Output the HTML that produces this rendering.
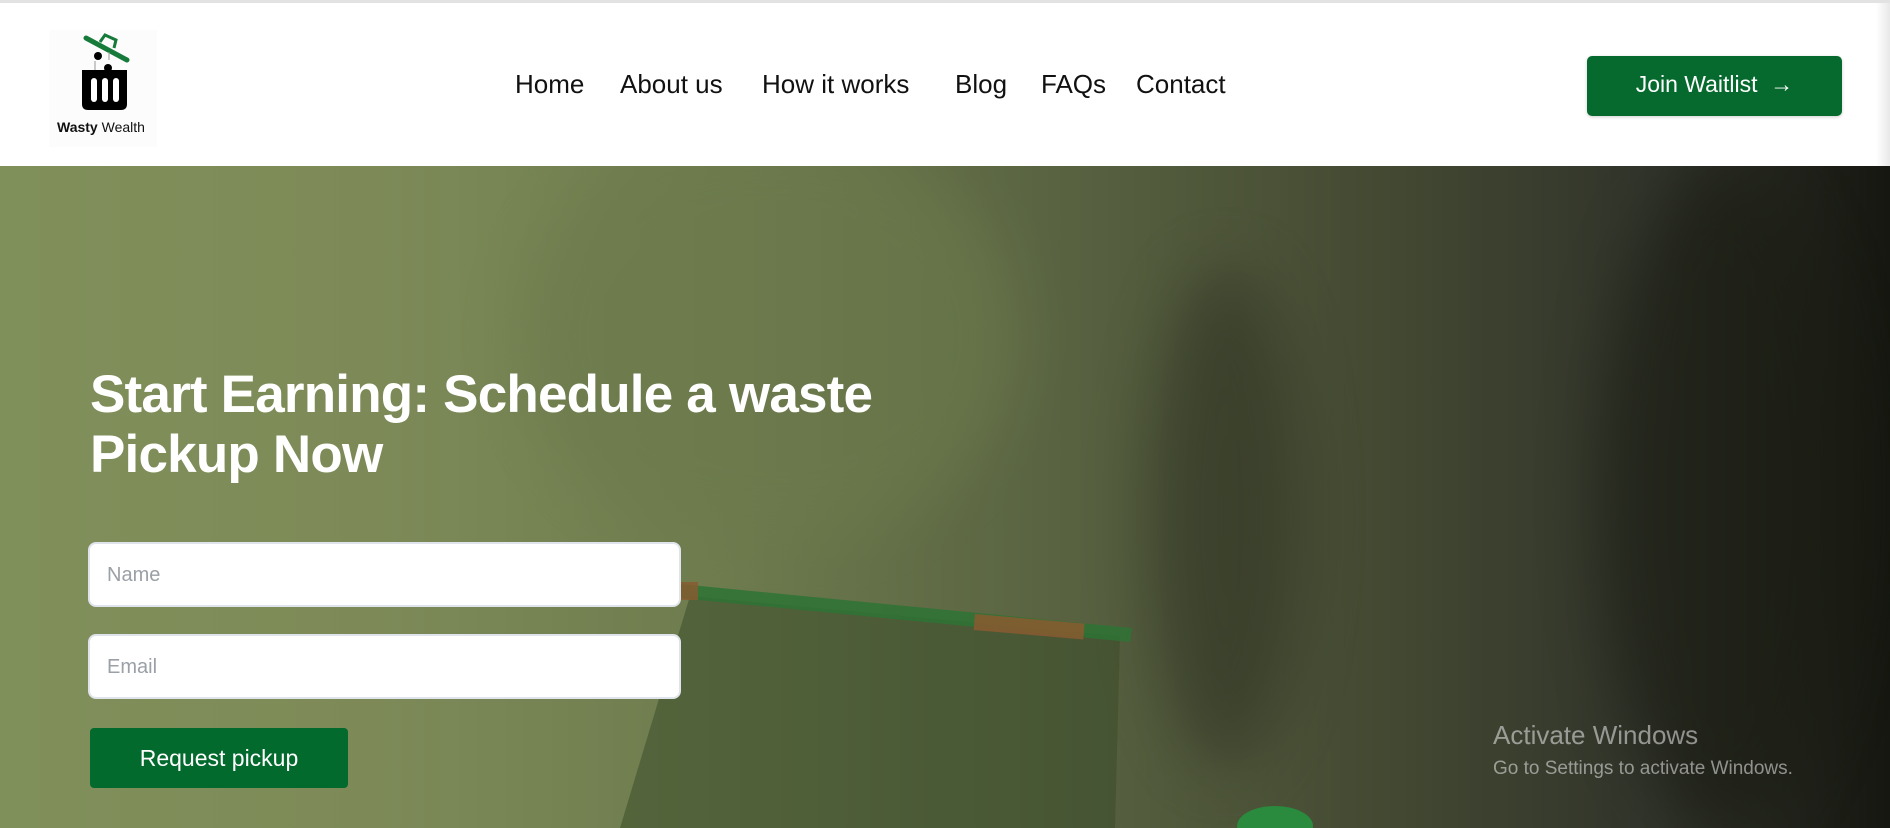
<!DOCTYPE html>
<html><head><meta charset="utf-8"><style>
*{margin:0;padding:0;box-sizing:border-box}
body{width:1890px;height:828px;overflow:hidden;font-family:"Liberation Sans",sans-serif;background:#fff;position:relative}
.top{position:absolute;left:0;top:0;width:1890px;height:3px;background:#e2e2e2}
header{position:absolute;left:0;top:3px;width:1890px;height:163px;background:#fff}
.logo{position:absolute;left:49px;top:27px;width:108px;height:117px;background:#fcfcfc}
nav{position:absolute;top:66px;left:515px;font-size:26px;color:#111}
nav span{position:absolute;white-space:nowrap}
.join{position:absolute;left:1587px;top:53px;width:255px;height:60px;background:#066a2e;border-radius:5px;color:#fff;font-size:23px;display:flex;align-items:center;justify-content:center;box-shadow:0 1px 3px rgba(0,0,0,.2);padding-bottom:3px}
.hero{position:absolute;left:0;top:166px;width:1890px;height:662px;overflow:hidden;
background:linear-gradient(90deg,#80905a 0%,#7d8a58 20%,#6e7c4e 38%,#5a6442 55%,#454b33 72%,#30332a 88%,#151710 100%)}
.blob{position:absolute;border-radius:50%;filter:blur(30px)}
h1{position:absolute;left:90px;top:365px;color:#fff;font-size:53px;font-weight:bold;line-height:60px;letter-spacing:-0.8px}
.inp{position:absolute;left:88px;width:593px;height:65px;background:#fff;border:2px solid #dfe3ec;border-radius:8px;font-size:20px;color:#9aa0a6;padding:20px 0 0 17px}
.req{position:absolute;left:90px;top:728px;width:258px;height:60px;background:#036a2e;border-radius:4px;color:#fff;font-size:23px;display:flex;align-items:center;justify-content:center}
.win{position:absolute;left:1493px;color:rgba(220,220,220,.6);font-family:"Liberation Sans",sans-serif}
.shadow{position:absolute;left:1876px;top:3px;width:14px;height:163px;background:linear-gradient(90deg,#fff,#e8e8e8)}
</style></head><body>
<div class="top"></div>
<header>
<div class="logo">
<svg width="108" height="117" viewBox="0 0 108 117">
<path d="M37 8 L78 30" stroke="#157a3a" stroke-width="5" stroke-linecap="round"/>
<path d="M51 12 L56 5 L67 10 L65 18" stroke="#157a3a" stroke-width="3" fill="none"/>
<circle cx="49" cy="26" r="4" fill="#000"/><circle cx="59" cy="38" r="4" fill="#000"/>
<line x1="46" y1="31" x2="46" y2="40" stroke="#999"/><line x1="60" y1="22" x2="60" y2="30" stroke="#999"/>
<path d="M33 40 H78 V74 Q78 80 72 80 H39 Q33 80 33 74 Z" fill="#000"/>
<rect x="42" y="48" width="6" height="24" rx="3" fill="#fff"/><rect x="53" y="48" width="6" height="24" rx="3" fill="#fff"/><rect x="64" y="48" width="6" height="24" rx="3" fill="#fff"/>
<text x="8" y="102" font-family="Liberation Sans Narrow, Liberation Sans, sans-serif" font-size="14" fill="#111"><tspan font-weight="bold">Wasty</tspan> Wealth</text>
</svg>
</div>
<nav><span style="left:0">Home</span><span style="left:105px">About us</span><span style="left:247px">How it works</span><span style="left:440px">Blog</span><span style="left:526px">FAQs</span><span style="left:621px">Contact</span></nav>
<div class="join">Join Waitlist&nbsp;&nbsp;→</div>
</header>
<div class="shadow"></div>
<div class="hero">
<div class="blob" style="left:520px;top:-40px;width:500px;height:420px;background:#6c7a4c;opacity:.6"></div>
<div class="blob" style="left:1150px;top:100px;width:150px;height:500px;background:#2a2d20;opacity:.5"></div>
<div class="blob" style="left:1600px;top:0;width:250px;height:662px;background:#1a1c12;opacity:.6"></div>
<svg style="position:absolute;left:0;top:0" width="1890" height="662">
<path d="M690 430 L1120 470 L1115 662 L620 662 Z" fill="#3a4d2a" opacity=".55"/>
<path d="M680 418 L1132 462 L1130 476 L678 432 Z" fill="#2e7335" opacity=".85"/>
<rect x="975" y="448" width="110" height="16" fill="#8a5a30" opacity=".85" transform="rotate(5 975 448)"/>
<rect x="680" y="416" width="18" height="18" fill="#8a5a30" opacity=".8"/>
<ellipse cx="1275" cy="660" rx="38" ry="20" fill="#2a8a3e"/>
</svg>
</div>
<h1>Start Earning: Schedule a waste<br>Pickup Now</h1>
<div class="inp" style="top:542px">Name</div>
<div class="inp" style="top:634px">Email</div>
<div class="req">Request pickup</div>
<div class="win" style="top:720px;font-size:26px">Activate Windows</div>
<div class="win" style="top:758px;font-size:19px">Go to Settings to activate Windows.</div>
</body></html>
